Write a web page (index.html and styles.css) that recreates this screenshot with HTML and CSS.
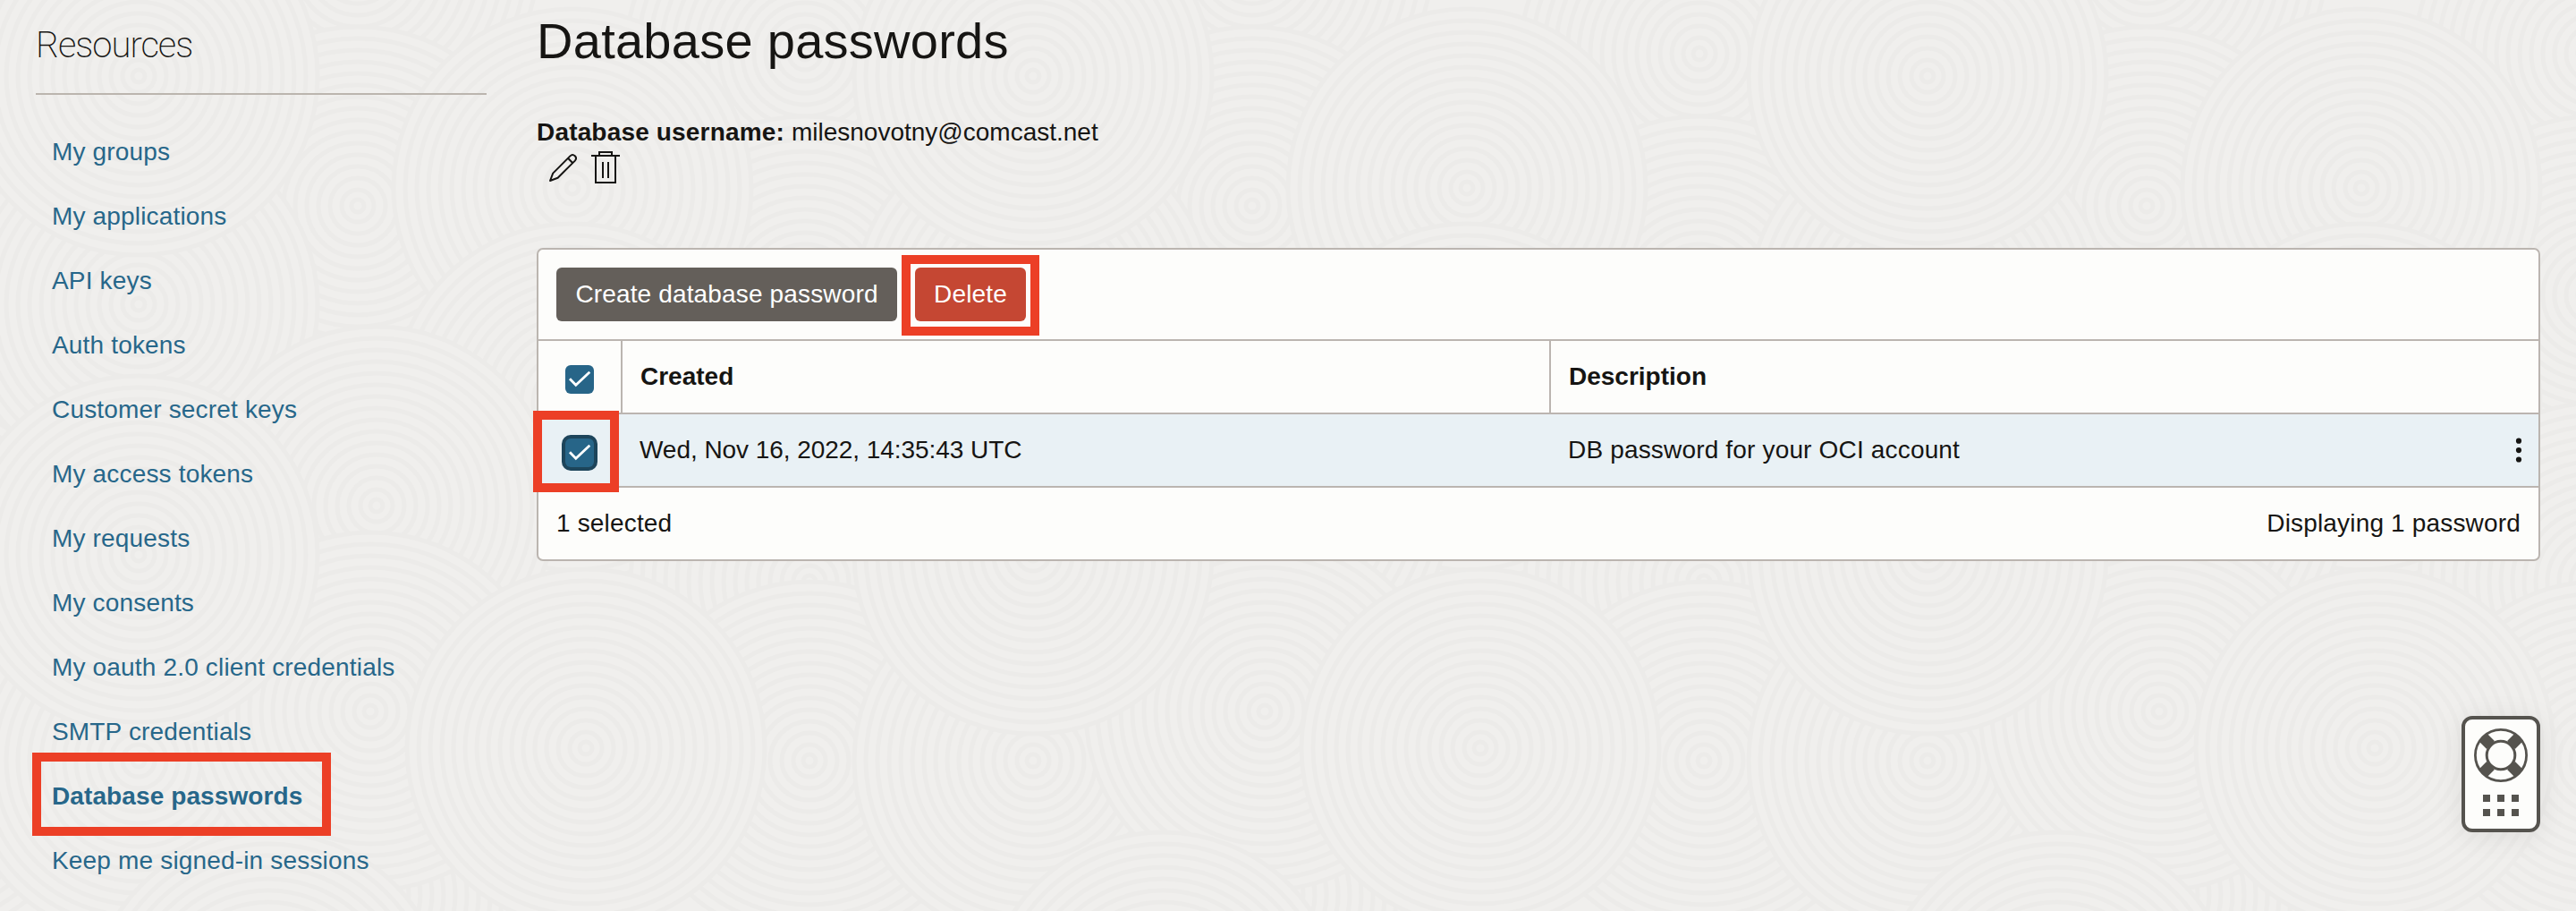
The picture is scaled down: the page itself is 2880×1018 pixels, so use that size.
FILE: index.html
```
<!DOCTYPE html>
<html lang="en">
<head>
<meta charset="utf-8">
<title>Database passwords</title>
<link rel="stylesheet" href="styles.css">
</head>
<body>
<svg class="backdrop" width="2880" height="1018" viewBox="0 0 2880 1018" aria-hidden="true">
  <defs>
    <g id="rings">
      <circle class="disc" r="200"/>
      <circle r="187"/><circle r="174"/><circle r="161"/><circle r="148"/><circle r="135"/><circle r="122"/><circle r="109"/><circle r="96"/><circle r="83"/><circle r="70"/><circle r="57"/><circle r="44"/><circle r="31"/><circle r="18"/><circle r="7"/>
    </g>
    <g id="tile">
      <use href="#rings" x="400" y="-40"/>
      <use href="#rings" x="900" y="60"/>
      <use href="#rings" x="400" y="230"/>
      <use href="#rings" x="900" y="330"/>
      <use href="#rings" x="640" y="210"/>
      <use href="#rings" x="155" y="340"/>
      <use href="#rings" x="155" y="85"/>
      <use href="#rings" x="640" y="450"/>
      <use href="#rings" x="905" y="650"/>
      <use href="#rings" x="421" y="565"/>
      <use href="#rings" x="400" y="1000"/>
      <use href="#rings" x="905" y="850"/>
      <use href="#rings" x="155" y="850"/>
      <use href="#rings" x="414" y="795"/>
      <use href="#rings" x="155" y="620"/>
      <use href="#rings" x="655" y="836"/>
      <use href="#rings" x="300" y="1130"/>
    </g>
  </defs>
  <use href="#tile" x="-1000"/>
  <use href="#tile"/>
  <use href="#tile" x="1000"/>
  <use href="#tile" x="2000"/>
</svg>

<div class="page">
  <aside class="sidebar">
    <h2 class="sidebar-title">Resources</h2>
    <ul class="menu">
      <li><a>My groups</a></li>
      <li><a>My applications</a></li>
      <li><a>API keys</a></li>
      <li><a>Auth tokens</a></li>
      <li><a>Customer secret keys</a></li>
      <li><a>My access tokens</a></li>
      <li><a>My requests</a></li>
      <li><a>My consents</a></li>
      <li><a>My oauth 2.0 client credentials</a></li>
      <li><a>SMTP credentials</a></li>
      <li class="active"><a>Database passwords</a><span class="mark mark-menu"></span></li>
      <li><a>Keep me signed-in sessions</a></li>
    </ul>
  </aside>

  <main class="content">
    <h1 class="title">Database passwords</h1>
    <div class="username"><b>Database username:</b> <span class="email">milesnovotny@comcast.net</span></div>
    <div class="actions">
      <svg width="34" height="36" viewBox="0 0 34 36" fill="none" stroke="#161513" stroke-width="2" stroke-linejoin="round">
        <path d="M2 33 L5.2 24.6 L24.4 5.4 C26.2 3.6 28.4 4 29.8 5.3 C31.2 6.7 31.4 8.8 29.8 10.6 L10.6 29.8 Z"/>
        <path d="M22 7.8 L27.4 13.2"/>
      </svg>
      <svg width="32" height="36" viewBox="0 0 32 36" fill="none" stroke="#161513" stroke-width="2">
        <path d="M0 5H32M9 5V1H23V5M5 5V35H27V5M13 12V30M19 12V30"/>
      </svg>
    </div>

    <section class="card">
      <div class="toolbar">
        <button class="btn">Create database password</button>
        <div class="marked">
          <button class="btn btn-danger">Delete</button>
          <span class="mark mark-delete"></span>
        </div>
      </div>
      <div class="row head">
        <div class="cell check">
          <span class="box"><svg width="32" height="32" viewBox="0 0 32 32"><path d="M5 15.3L11.8 22.3L27.3 7.8"/></svg></span>
        </div>
        <div class="cell">Created</div>
        <div class="cell">Description</div>
      </div>
      <div class="row selected">
        <div class="cell check">
          <span class="box focused"><svg width="32" height="32" viewBox="0 0 32 32"><path d="M5 15.3L11.8 22.3L27.3 7.8"/></svg></span>
          <span class="mark mark-check"></span>
        </div>
        <div class="cell date">Wed, Nov 16, 2022, 14:35:43 UTC</div>
        <div class="cell last">
          <span>DB password for your OCI account</span>
          <svg width="8" height="28" viewBox="0 0 8 28" fill="#161513"><circle cx="4" cy="3.7" r="3.1"/><circle cx="4" cy="14.1" r="3.1"/><circle cx="4" cy="24.5" r="3.1"/></svg>
        </div>
      </div>
      <div class="footer"><span>1 selected</span><span>Displaying 1 password</span></div>
    </section>
  </main>
</div>

<div class="support">
  <svg width="60" height="60" viewBox="-30 -30 60 60" fill="none" stroke="#55534e">
    <circle r="28.6" stroke-width="2.8"/>
    <circle r="15.8" stroke-width="3"/>
    <path stroke-width="12.5" d="M-20 -20L-11.5 -11.5M20 -20L11.5 -11.5M-20 20L-11.5 11.5M20 20L11.5 11.5"/>
  </svg>
  <div class="dots"><i></i><i></i><i></i><i></i><i></i><i></i></div>
</div>
</body>
</html>
```
FILE: styles.css
```
* { box-sizing: border-box; }

body {
  margin: 0;
  width: 2880px;
  height: 1018px;
  overflow: hidden;
  position: relative;
  background: #f0efed;
  color: #161513;
  font-family: "Liberation Sans", Arial, sans-serif;
  font-size: 28px;
  letter-spacing: 0.17px;
}

.backdrop {
  position: absolute;
  left: 0;
  top: 0;
  fill: none;
  stroke: #ecebe9;
  stroke-width: 5;
}
.disc { fill: #f0efed; }

.page {
  position: relative;
  display: flex;
  gap: 56px;
  padding: 0 40px;
}

.sidebar { width: 504px; flex: none; padding-top: 21px; }
.sidebar-title {
  margin: 0;
  height: 85px;
  border-bottom: 2px solid #bbb5ae;
  font: 200 40px/60px Roboto, sans-serif;
  letter-spacing: -1px;
}
.menu { list-style: none; margin: 28px 0 0; padding: 0 0 0 18px; }
.menu li { position: relative; line-height: 72px; height: 72px; color: #27678a; }
.menu .active { font-weight: bold; letter-spacing: 0.1px; }

.mark { position: absolute; border: 10px solid #ec3f26; }
.mark-menu { left: -22px; top: -13px; width: 334px; height: 93px; }

.content { flex: 1; padding-top: 10px; }
.title { margin: 0; font-weight: 400; font-size: 56px; line-height: 72px; letter-spacing: 0.27px; }
.username { margin-top: 46px; line-height: 40px; height: 41px; }
.email { letter-spacing: 0; }
.actions { display: flex; gap: 14px; padding-left: 13px; height: 36px; }

.card {
  margin-top: 72px;
  border: 2px solid #bbb5b0;
  border-radius: 7px;
  background: #fdfdfb;
}
.toolbar { display: flex; gap: 20px; padding: 20px; height: 100px; }
.btn {
  height: 60px;
  width: 381px;
  padding: 0;
  border: 0;
  border-radius: 6px;
  background: #645f5a;
  color: #fff;
  font: inherit;
  line-height: 60px;
  letter-spacing: 0.15px;
}
.marked { position: relative; }
.btn-danger { width: 124px; background: #c54733; }
.mark-delete { left: -15px; top: -14px; width: 154px; height: 90px; }

.row {
  display: grid;
  grid-template-columns: 92px 1038px 1fr;
  height: 82px;
  line-height: 80px;
  border-top: 2px solid #bbb5b0;
}
.cell { padding-left: 21px; }
.head { font-weight: bold; letter-spacing: 0; }
.head .cell + .cell { border-left: 2px solid #bbb5b0; padding-left: 20px; }
.row .check { position: relative; padding: 27px 0 0 30px; }
.selected .check { padding-top: 27px; }
.mark-check { left: -6px; top: -4px; width: 96px; height: 91px; }
.box { display: block; width: 32px; height: 32px; border-radius: 6px; background: #276588; }
.box svg { display: block; fill: none; stroke: #fff; stroke-width: 2.8; }
.focused { box-shadow: 0 0 0 4px #1d455b; }
.selected { background: #e9f1f5; }
.date { letter-spacing: -0.05px; }
.last { display: flex; justify-content: space-between; align-items: center; padding-right: 18px; }
.footer {
  display: flex;
  justify-content: space-between;
  height: 82px;
  padding: 0 20px;
  border-top: 2px solid #bbb5b0;
  line-height: 80px;
}

.support {
  position: absolute;
  left: 2752px;
  top: 800px;
  width: 88px;
  height: 130px;
  display: flex;
  flex-direction: column;
  align-items: center;
  gap: 14px;
  padding-top: 10px;
  border: 4px solid #55534e;
  border-radius: 12px;
  background: #fdfdfb;
  box-shadow: 0 4px 32px rgba(0, 0, 0, 0.08);
}
.dots { display: grid; grid-template-columns: repeat(3, 8px); gap: 8px; }
.dots i { height: 8px; background: #55534e; }
```
